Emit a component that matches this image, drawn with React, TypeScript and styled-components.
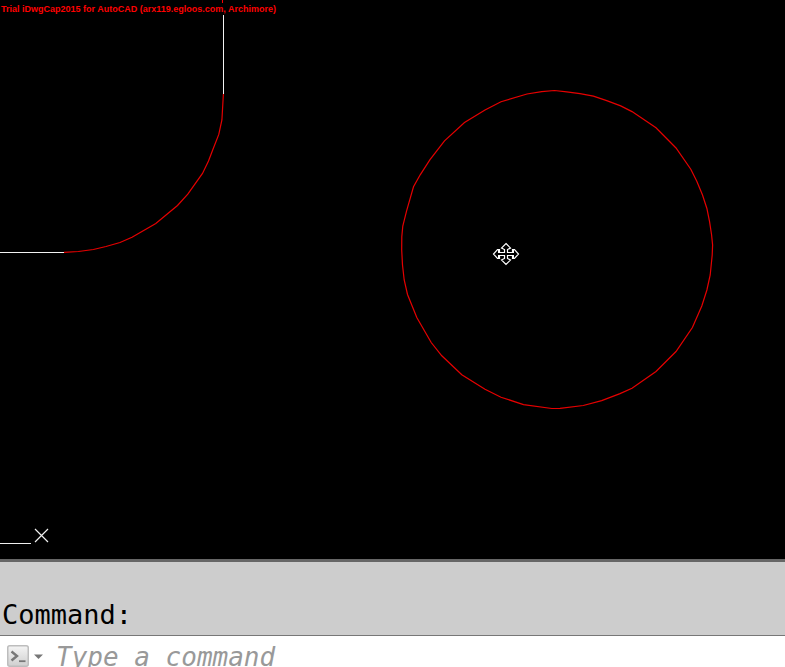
import React from "react";
import styled, { createGlobalStyle } from "styled-components";

const GlobalStyle = createGlobalStyle`
  * { box-sizing: border-box; }
  html, body { margin: 0; background: #000; }
`;

const Workspace = styled.main`
  display: flex;
  flex-direction: column;
  height: 100vh;
  overflow: hidden;
`;

const Viewport = styled.section`
  position: relative;
  flex: 1;
  min-height: 0;
  background: #000;
`;

const Drawing = styled.svg`
  display: block;
  width: 100%;
  height: 100%;
`;

const TrialNotice = styled.div`
  position: absolute;
  top: 3px;
  left: 1px;
  color: #f00;
  font: bold 9px/12px "Liberation Sans", Arial, sans-serif;
  white-space: nowrap;
`;

const UcsMarker = styled.svg`
  position: absolute;
  left: 0;
  bottom: 12px;
`;

const CommandPanel = styled.section`
  flex: none;
  border-top: 3px solid #666;
  background: #cdcdcd;
`;

const History = styled.output`
  display: block;
  padding: 37px 2px 4px;
  font: 27px/32px "DejaVu Sans Mono", Consolas, monospace;
  color: #000;
`;

const PromptRow = styled.form`
  display: flex;
  align-items: flex-start;
  height: 32px;
  padding-left: 7px;
  border-top: 1px solid #777;
  background: #fff;
  overflow: hidden;
`;

const RecentButton = styled.button`
  display: flex;
  align-items: center;
  gap: 5px;
  flex: none;
  margin: 9px 13px 0 0;
  padding: 0;
  border: 0;
  background: none;
`;

const CommandInput = styled.input`
  flex: 1;
  min-width: 0;
  height: 42px;
  padding: 0;
  border: 0;
  outline: 0;
  background: none;
  color: #000;
  font: italic 26px/42px "DejaVu Sans Mono", Consolas, monospace;
  &::placeholder { color: #999; opacity: 1; }
`;

const arc =
  "223.4,94 221.9,120 218.8,134.4 212.4,150.8 208.5,161 202.5,173.4 187.8,194.2 177.5,205.5 155.8,223.5 132,237.2 120,242.5 106,246.5 93.4,249.5 78.4,251.5 64,252.4";

const circle =
  "554.5,90.5 541.7,91.6 527,94 501,101.7 485,110 464.5,122.6 444.5,140.9 430,159.6 420.2,174.8 413.5,186.8 406.6,210.8 402.8,226 401.8,236.7 401.7,250 402.5,265 404.2,280 407.5,294.5 416.8,317.5 431.2,342.5 441.8,355.8 461.8,374.8 485,389.2 501,397.2 523.5,404.6 551.8,408.5 560,408.4 583.3,405.5 601.7,400.6 620,393.6 632,388.2 656,371.5 676,351.5 692.4,327.5 701.8,306 706.9,290 710.2,275 712.2,255 712.6,245 711.6,235 709.6,221.8 706.9,208.5 702.5,195 696.8,181.2 690.8,169.2 676,148 656,127.8 632,111.6 620.7,105.9 606.7,100.6 593.4,96.2 580,93.6 566.7,91.8";

function MoveCursor() {
  return (
    <g
      transform="translate(506 254)"
      fill="#000"
      stroke="#fff"
      strokeWidth="1.2"
    >
      <path d="M0-10.500 4.500-6 1.500-4.500V-1.500H6.500V-4.500H8.500L12.500 0 8.500 4.500H6.500V1.500H1.500V4.500L4.500 6 0 10.500-4.500 6-1.500 4.500V1.500H-6.500V4.500H-8.500L-12.500 0-8.500-4.500H-6.500V-1.500H-1.500V-4.500L-4.500-6Z" />
      <path d="M-7-4V-1M-7 1V4M7-4V-1M7 1V4" strokeWidth="2" />
    </g>
  );
}

function PromptIcon() {
  return (
    <svg width="22" height="22" viewBox="0 0 22 22" aria-hidden="true">
      <defs>
        <linearGradient id="face" x1="0" y1="0" x2="0" y2="1">
          <stop offset="0" stopColor="#f4f4f4" />
          <stop offset="1" stopColor="#cfcfcf" />
        </linearGradient>
      </defs>
      <rect x=".75" y=".75" width="20.5" height="20.5" rx="2" fill="url(#face)" stroke="#bdbdbd" strokeWidth="1.5" />
      <path d="m4.500 6.500 5.500 4.500-5.500 4.500" fill="none" stroke="#777" strokeWidth="2.4" />
      <path d="M12 16.200h6.500" stroke="#777" strokeWidth="1.8" />
    </svg>
  );
}

export default function App() {
  return (
    <>
      <GlobalStyle />
      <Workspace>
        <Viewport aria-label="Model space">
          <Drawing aria-hidden="true">
            <path d="M222.5 0V3" stroke="#f00" />
            <path d="M223.5 15V94M0 252.5H64" stroke="#f2f2f2" fill="none" />
            <polyline points={arc} fill="none" stroke="#e60000" strokeWidth="1.2" />
            <polygon points={circle} fill="none" stroke="#e60000" strokeWidth="1.2" />
            <MoveCursor />
          </Drawing>
          <TrialNotice>Trial iDwgCap2015 for AutoCAD (arx119.egloos.com, Archimore)</TrialNotice>
          <UcsMarker width="50" height="20" aria-hidden="true">
            <path d="M0 16.5H31" stroke="#f0f0f0" />
            <path d="M35 2 48 15M48 2 35 15" stroke="#f0f0f0" strokeWidth="1.2" />
          </UcsMarker>
        </Viewport>
        <CommandPanel>
          <History>Command:</History>
          <PromptRow onSubmit={(e: React.FormEvent) => e.preventDefault()}>
            <RecentButton type="button" aria-label="Recent commands">
              <PromptIcon />
              <svg width="9" height="5" viewBox="0 0 9 5" aria-hidden="true">
                <path d="M0 .5h9L4.500 5Z" fill="#777" />
              </svg>
            </RecentButton>
            <CommandInput aria-label="Command" placeholder="Type a command" />
          </PromptRow>
        </CommandPanel>
      </Workspace>
    </>
  );
}
